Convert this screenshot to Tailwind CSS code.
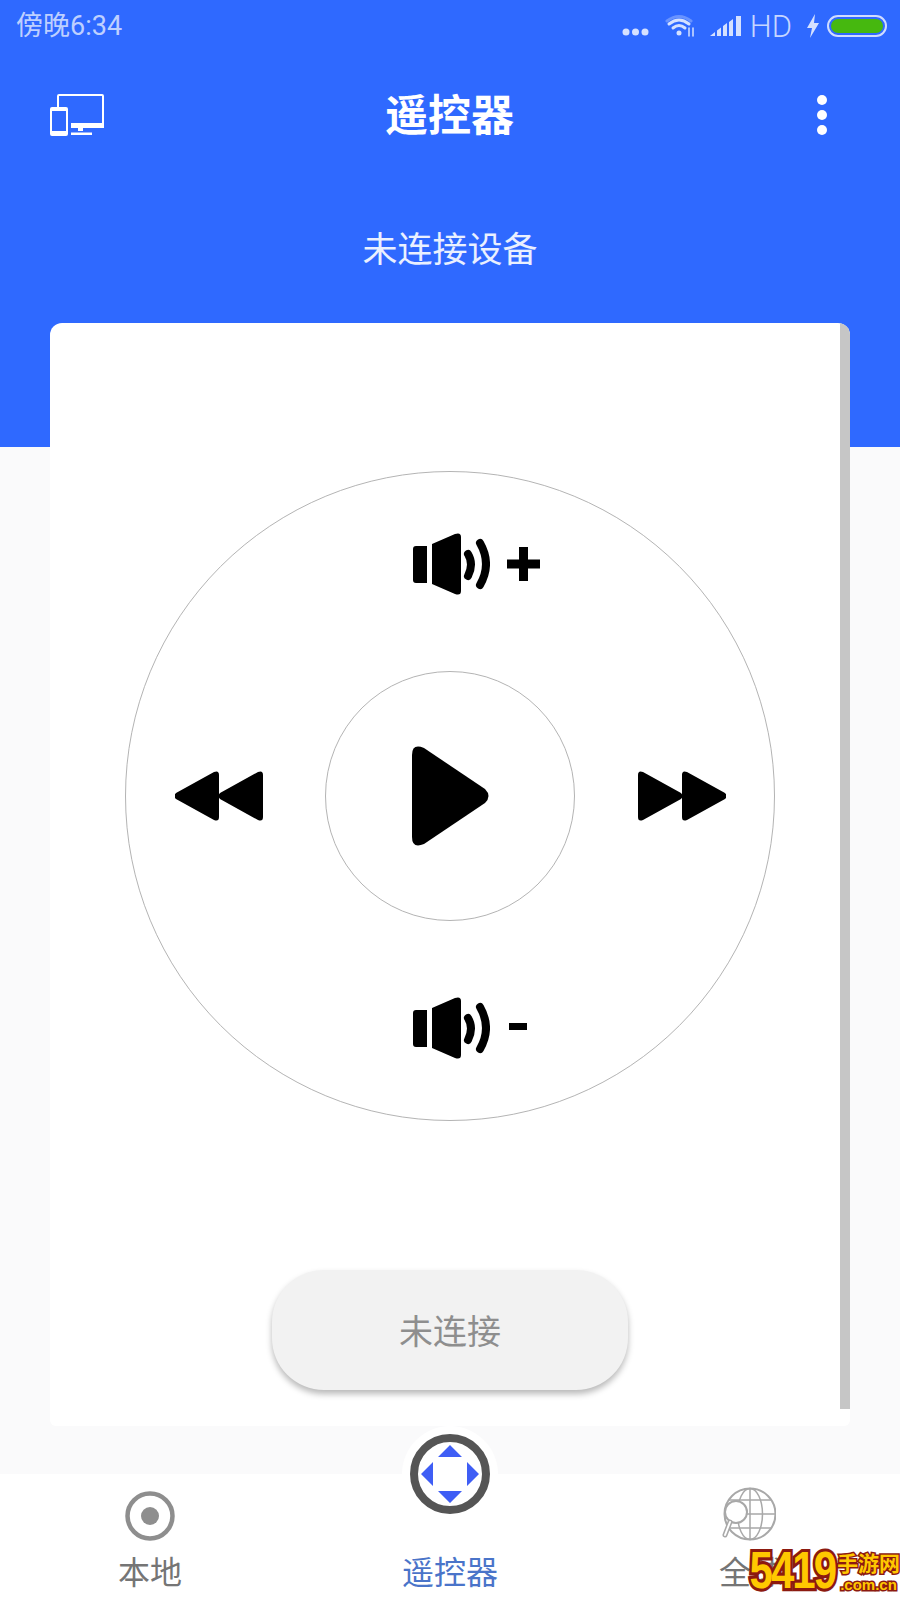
<!DOCTYPE html>
<html lang="zh">
<head>
  <meta charset="UTF-8">
  <meta name="viewport" content="width=device-width, initial-scale=1.0">
  <title>遥控器</title>
  <script src="https://cdn.jsdelivr.net/npm/@tailwindcss/browser@4"></script>
</head>
<body class="bg-[#fafafb] font-['Roboto','Noto_Sans_CJK_SC',sans-serif]">
<div class="relative w-[900px] h-[1600px] overflow-hidden flex flex-col">

  <!-- blue header -->
  <div class="h-[447px] shrink-0 bg-[#2f69ff] text-white">
    <div class="h-[52px] flex items-center pl-[16px] pr-[13px] text-white/70">
      <span class="text-[27px] leading-none">傍晚6:34</span>
      <div class="ml-auto flex items-center">
        <svg width="27" height="8" viewBox="0 0 27 8" class="mt-[11px]"><g fill="#d5e1ff"><circle cx="4" cy="4" r="3.500"/><circle cx="13.500" cy="4" r="3.500"/><circle cx="23" cy="4" r="3.500"/></g></svg>
        <svg width="32" height="24" viewBox="0 0 32 24" class="ml-[15px] mb-[2px]" fill="none" stroke="#d5e1ff" stroke-linecap="round"><path d="M3 8 Q15 -1 27 8" stroke-width="3" opacity=".35"/><path d="M5 11 Q15 3 25 11" stroke-width="3"/><path d="M9 15 Q15 10 21 15" stroke-width="3"/><circle cx="15" cy="20" r="2.500" fill="#d5e1ff" stroke="none"/><path d="M25 15v8M29 15v8" stroke-width="1.500"/></svg>
        <svg width="32" height="22" viewBox="0 0 32 22" class="ml-[14px]" fill="#d5e1ff"><path d="M0 21l5-4v4zM7 15.500l4-3V21H7zM13 11l4-3v13h-4zM19 7l4-3v17h-4zM26 1h5v20h-5z"/></svg>
        <span class="ml-[8px] text-[31px] leading-none font-light text-[#c6d6ff]">HD</span>
        <svg width="14" height="24" viewBox="0 0 14 24" class="ml-[14px]" fill="#d5e1ff"><path d="M9 0L1 14h5l-2 10 9-15H8z"/></svg>
        <div class="ml-[7px] w-[60px] h-[22px] rounded-full border-2 border-[#cfdcff] p-[2px]">
          <div class="w-full h-full rounded-full bg-[#46b80f]"></div>
        </div>
      </div>
    </div>

    <div class="mt-[40px] h-[42px] grid grid-cols-[1fr_auto_1fr] items-center pl-[50px] pr-[72px]">
      <svg width="54" height="42" viewBox="0 0 54 42" fill="white">
        <path fill-rule="evenodd" d="M9 0h43a2 2 0 0 1 2 2v30a2 2 0 0 1-2 2H21v-4h31V2H9v11H7V2a2 2 0 0 1 2-2z"/>
        <rect x="21" y="29" width="33" height="5"/>
        <path d="M28 34h5v3h-5zM21 38.500h21V41H21z"/>
        <path fill-rule="evenodd" d="M2 13h14a2 2 0 0 1 2 2v25a2 2 0 0 1-2 2H2a2 2 0 0 1-2-2V15a2 2 0 0 1 2-2zm0 4v20h14V17z"/>
      </svg>
      <h1 class="text-[43px] leading-none font-bold mt-[3px] ml-[21px]">遥控器</h1>
      <svg width="12" height="42" viewBox="0 0 12 42" fill="white" class="justify-self-end"><circle cx="6" cy="6" r="5"/><circle cx="6" cy="21" r="5"/><circle cx="6" cy="36" r="5"/></svg>
    </div>

    <p class="mt-[94px] text-center text-[35px] leading-[46px] text-white/90">未连接设备</p>
  </div>

  <!-- card -->
  <div class="relative z-10 mx-[50px] -mt-[124px] w-[800px] h-[1103px] shrink-0 flex flex-col items-center bg-white rounded-t-[12px] rounded-b-[6px] overflow-hidden">
    <div class="absolute right-0 top-0 w-[10px] h-[1086px] bg-[#c6c6c6]"></div>

    <!-- dial -->
    <div class="mt-[148px] w-[650px] h-[650px] shrink-0 rounded-full border border-[#b4b4b4] flex flex-col items-center">
      <div class="mt-[61px] ml-[52px] flex items-center gap-[17px]">
        <svg width="77" height="62" viewBox="0 0 77 62"><path d="M3 13h11v37H3a3 3 0 0 1-3-3V16a3 3 0 0 1 3-3zM19 11L42 1q6-2 6 3v54q0 5-6 3L19 51z"/><path d="M55 21q6 10 0 22M67 10q12 21 0 42" fill="none" stroke="black" stroke-width="8" stroke-linecap="round"/></svg>
        <svg width="33" height="34" viewBox="0 0 33 34"><path d="M12 0h9v12.500h12v9H21V34h-9V21.500H0v-9h12z"/></svg>
      </div>

      <div class="mt-[76px] w-full flex items-center pl-[49px]">
        <svg width="88" height="50" viewBox="0 0 88 50"><path d="M1 22L39 1q5-2 5 3v42q0 5-5 3L1 28q-3-3 0-6zM45 22L83 1q5-2 5 3v42q0 5-5 3L45 28q-3-3 0-6z"/></svg>
        <div class="ml-[62px] w-[250px] h-[250px] rounded-full border border-[#b4b4b4] flex items-center justify-center">
          <svg width="78" height="100" viewBox="0 0 78 100" class="ml-[2px]"><path d="M0 9Q0 -3 12 2L73 43q7 7 0 14L12 98Q0 103 0 91z"/></svg>
        </div>
        <svg width="88" height="50" viewBox="0 0 88 50" class="ml-[63px]"><path d="M87 22L49 1q-5-2-5 3v42q0 5 5 3l38-21q3-3 0-6zM43 22L5 1q-5-2-5 3v42q0 5 5 3l38-21q3-3 0-6z"/></svg>
      </div>

      <div class="mt-[76px] ml-[40px] flex items-center gap-[19px]">
        <svg width="77" height="62" viewBox="0 0 77 62"><path d="M3 13h11v37H3a3 3 0 0 1-3-3V16a3 3 0 0 1 3-3zM19 11L42 1q6-2 6 3v54q0 5-6 3L19 51z"/><path d="M55 21q6 10 0 22M67 10q12 21 0 42" fill="none" stroke="black" stroke-width="8" stroke-linecap="round"/></svg>
        <div class="w-[18px] h-[7px] bg-black mb-[4px]"></div>
      </div>
    </div>

    <button class="mt-[149px] w-[356px] h-[120px] pt-[4px] rounded-[52px] bg-[#f2f2f2] text-[#8e8e8e] text-[34px] shadow-[0_4px_6px_rgba(0,0,0,0.28)]">未连接</button>
  </div>

  <!-- bottom nav -->
  <div class="absolute left-0 right-0 bottom-0 h-[126px] bg-white grid grid-cols-3 z-20">
    <div class="flex flex-col items-center pt-[17px]">
      <svg width="50" height="50" viewBox="0 0 50 50"><circle cx="25" cy="25" r="22.500" fill="none" stroke="#8e8e8e" stroke-width="4.500"/><circle cx="25" cy="25" r="9" fill="#8e8e8e"/></svg>
      <span class="mt-[11px] text-[32px] leading-[42px] text-[#757575]">本地</span>
    </div>
    <div class="flex flex-col items-center">
      <span class="mt-[78px] text-[32px] leading-[42px] text-[#4a74c9]">遥控器</span>
    </div>
    <div class="flex flex-col items-start pl-[119px] pt-[13px]">
      <svg width="54" height="54" viewBox="0 0 54 54" fill="none" stroke="#a8a8a8" stroke-width="1.500" class="ml-[3px]"><circle cx="28" cy="27" r="25.500" stroke-width="2"/><ellipse cx="28" cy="27" rx="12.500" ry="25.500"/><path d="M28 1.500v51M3 27h50M7 13h42M7 41h42"/><circle cx="14" cy="25" r="11" fill="white" stroke-width="2"/><path d="M8 35L3 48" stroke-width="5" stroke-linecap="round"/><path d="M8 35L3 48" stroke="white" stroke-width="2" stroke-linecap="round"/></svg>
      <span class="text-[32px] leading-[42px] text-[#757575] mt-[11px]">全球</span>
    </div>
  </div>

  <!-- raised tab button overlapping the nav edge -->
  <div class="absolute z-30 left-[402px] top-[1426px] w-[96px] h-[96px] rounded-full bg-white flex items-center justify-center">
    <svg width="80" height="80" viewBox="0 0 80 80"><circle cx="40" cy="40" r="36" fill="none" stroke="#555555" stroke-width="8"/><g fill="#3f5ef5"><path d="M40 11L52 23H28zM40 69L28 57H52zM11 40L23 28V52zM69 40L57 28V52z"/></g></svg>
  </div>

  <!-- watermark -->
  <div class="absolute z-40 right-0 bottom-[5px] flex items-end font-['Liberation_Sans','Noto_Sans_CJK_SC',sans-serif] font-bold">
    <span class="inline-block origin-bottom scale-y-[1.25] text-[#ffc800] text-[42px] leading-[40px] tracking-[-2px] [-webkit-text-stroke:5px_#8c1a10] [paint-order:stroke]">5419</span>
    <div class="flex flex-col items-center ml-[2px] mb-[1px]">
      <span class="text-[#ffc800] text-[21px] leading-[24px] [-webkit-text-stroke:3px_#8c1a10] [paint-order:stroke]">手游网</span>
      <span class="text-[#ffc800] text-[15px] leading-[18px] [-webkit-text-stroke:3px_#8c1a10] [paint-order:stroke]">.com.cn</span>
    </div>
  </div>
</div>
</body>
</html>
